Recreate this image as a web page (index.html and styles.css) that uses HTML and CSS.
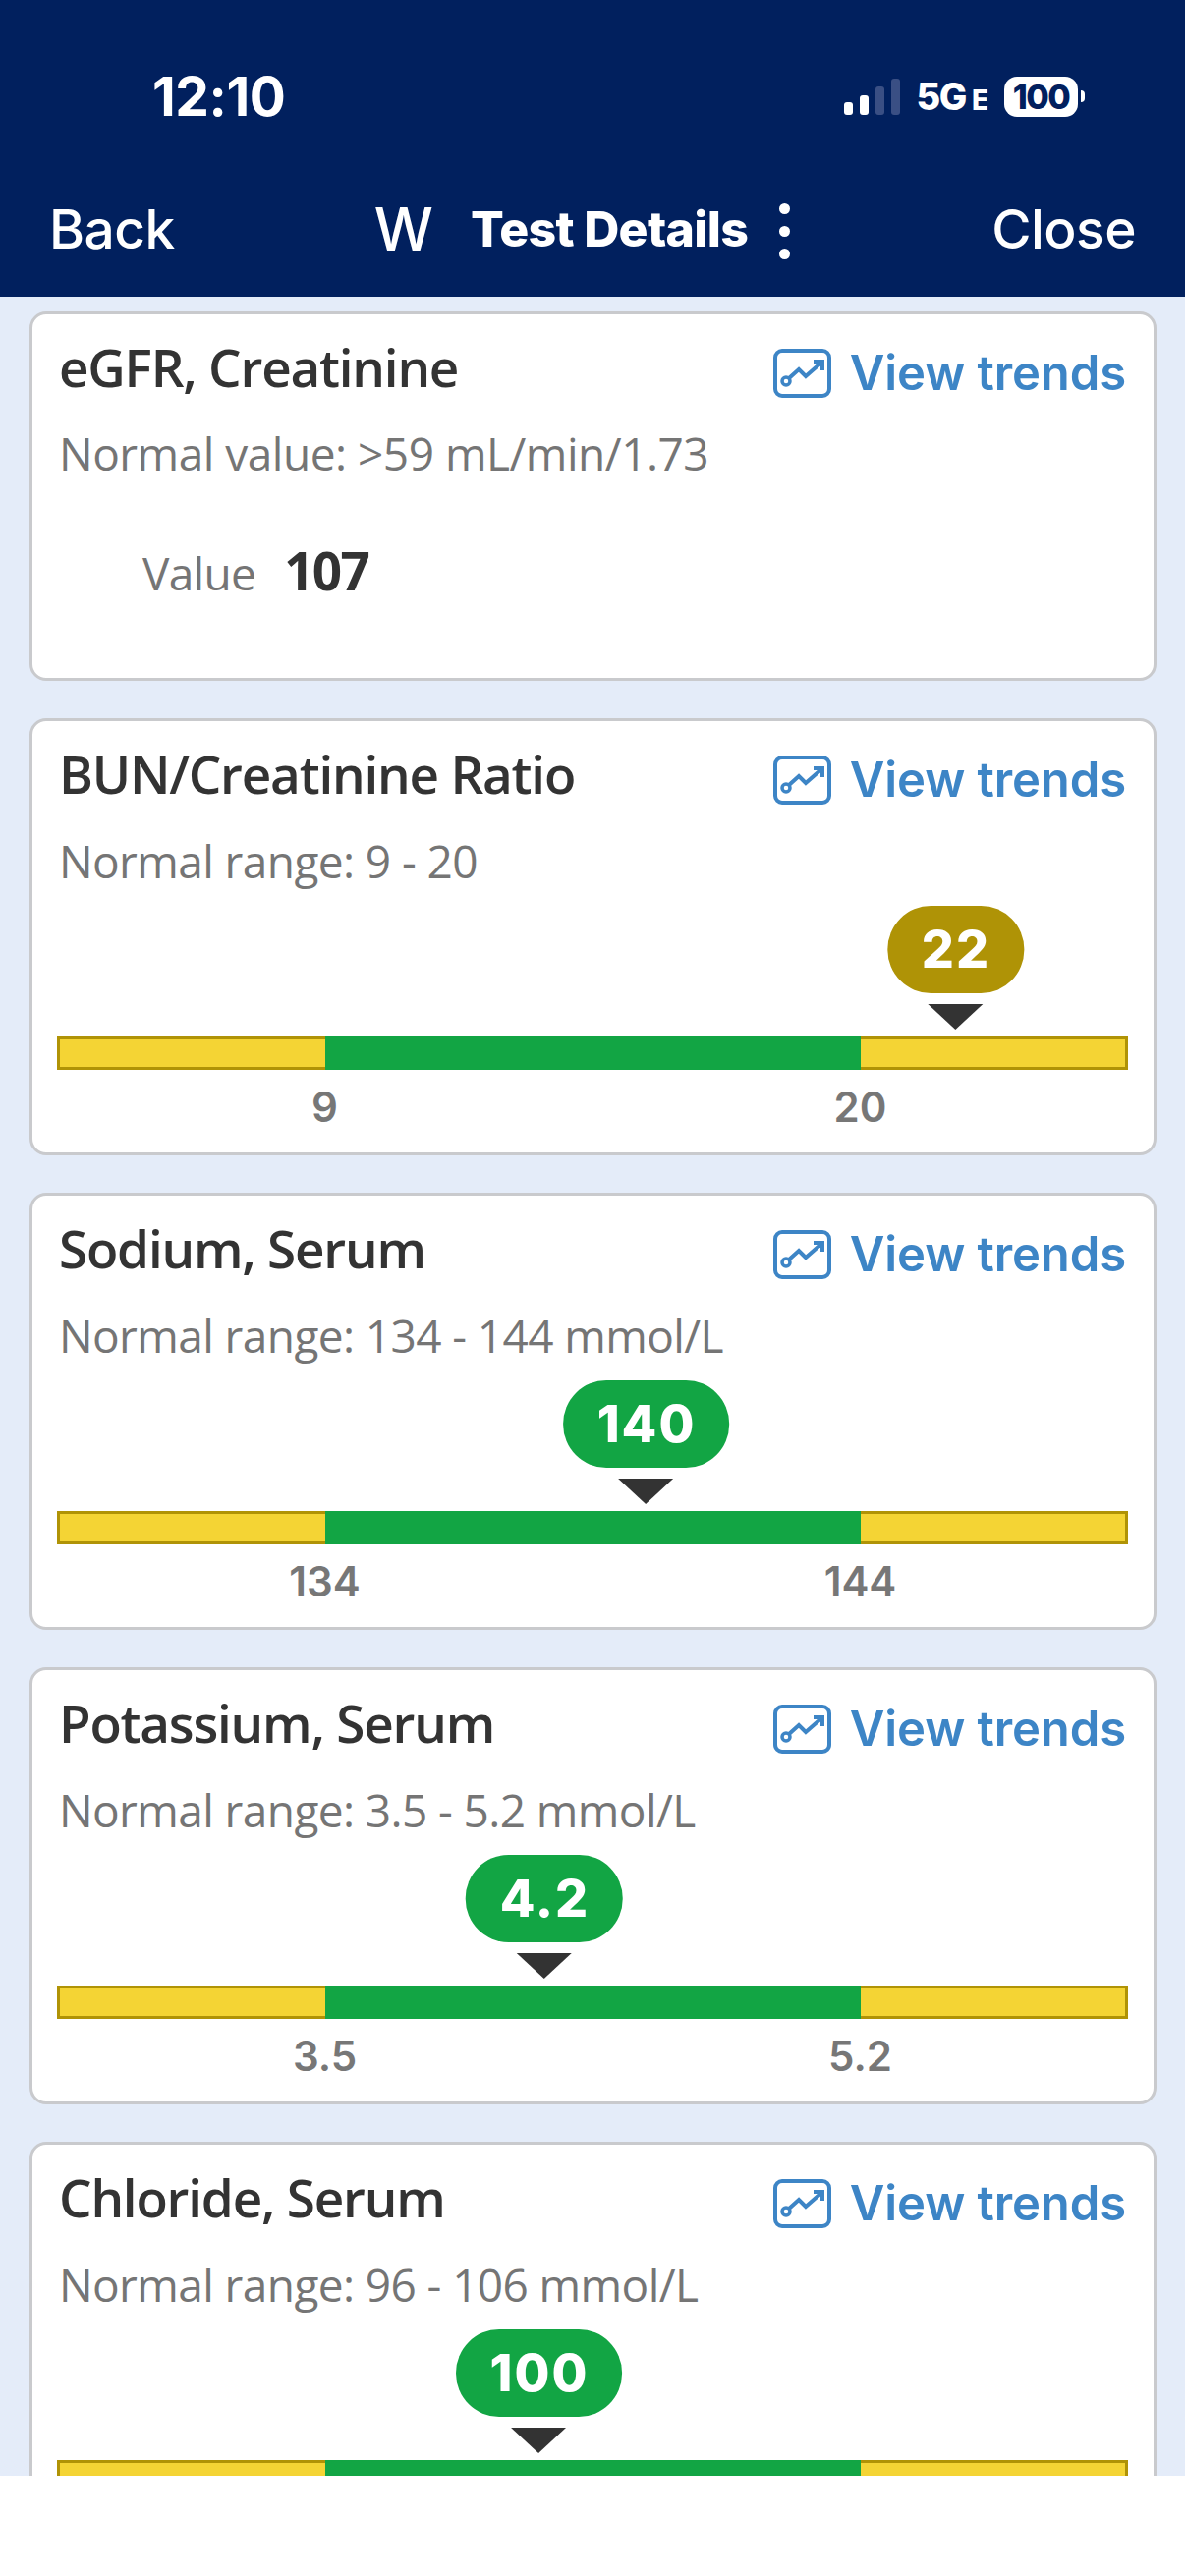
FILE: index.html
```html
<!DOCTYPE html>
<html lang="en">
<head>
<meta charset="utf-8">
<title>Test Details</title>
<link rel="stylesheet" href="styles.css">
</head>
<body>
<svg class="defs" width="0" height="0" aria-hidden="true">
  <symbol id="trend" viewBox="0 0 59 50">
    <rect x="2" y="2" width="55" height="46" rx="7" fill="none" stroke="currentColor" stroke-width="4"/>
    <circle cx="13" cy="33" r="4" fill="none" stroke="currentColor" stroke-width="3.5"/>
    <path d="M16 30 L26 21 L33 28 L49 14 M41 13 H50 V22" fill="none" stroke="currentColor" stroke-width="4"/>
  </symbol>
</svg>
<header class="header">
  <div class="status">
    <span class="time">12:10</span>
    <div class="status-right">
      <span class="signal"><i class="b1"></i><i class="b2"></i><i class="b3 dim"></i><i class="b4 dim"></i></span>
      <span class="net">5G<small>E</small></span>
      <span class="battery">100</span><span class="nub"></span>
    </div>
  </div>
  <nav class="nav">
    <span class="nav-link">Back</span>
    <div class="nav-center">
      <span class="nav-w">W</span>
      <span class="nav-title">Test Details</span>
      <span class="kebab"><i></i><i></i><i></i></span>
    </div>
    <span class="nav-link">Close</span>
  </nav>
</header>
<main class="content">
  <section class="card card-short">
    <div class="head"><h2 class="title">eGFR, Creatinine</h2><a class="trends"><svg class="trend-icon"><use href="#trend"/></svg>View trends</a></div>
    <p class="range">Normal value: &gt;59 mL/min/1.73</p>
    <p class="value-row"><span class="value-label">Value</span><b class="value-num">107</b></p>
  </section>

  <section class="card">
    <div class="head"><h2 class="title">BUN/Creatinine Ratio</h2><a class="trends"><svg class="trend-icon"><use href="#trend"/></svg>View trends</a></div>
    <p class="range">Normal range: 9 - 20</p>
    <div class="scale">
      <div class="track">
        <div class="marker" style="left:83.9%"><span class="bubble warn">22</span><span class="arrow"></span></div>
        <span class="seg low"></span><span class="seg ok"></span><span class="seg low"></span>
      </div>
      <div class="ticks"><span>9</span><span>20</span></div>
    </div>
  </section>

  <section class="card">
    <div class="head"><h2 class="title">Sodium, Serum</h2><a class="trends"><svg class="trend-icon"><use href="#trend"/></svg>View trends</a></div>
    <p class="range">Normal range: 134 - 144 mmol/L</p>
    <div class="scale">
      <div class="track">
        <div class="marker" style="left:55%"><span class="bubble">140</span><span class="arrow"></span></div>
        <span class="seg low"></span><span class="seg ok"></span><span class="seg low"></span>
      </div>
      <div class="ticks"><span>134</span><span>144</span></div>
    </div>
  </section>

  <section class="card">
    <div class="head"><h2 class="title">Potassium, Serum</h2><a class="trends"><svg class="trend-icon"><use href="#trend"/></svg>View trends</a></div>
    <p class="range">Normal range: 3.5 - 5.2 mmol/L</p>
    <div class="scale">
      <div class="track">
        <div class="marker" style="left:45.5%"><span class="bubble">4.2</span><span class="arrow"></span></div>
        <span class="seg low"></span><span class="seg ok"></span><span class="seg low"></span>
      </div>
      <div class="ticks"><span>3.5</span><span>5.2</span></div>
    </div>
  </section>

  <section class="card">
    <div class="head"><h2 class="title">Chloride, Serum</h2><a class="trends"><svg class="trend-icon"><use href="#trend"/></svg>View trends</a></div>
    <p class="range">Normal range: 96 - 106 mmol/L</p>
    <div class="scale">
      <div class="track">
        <div class="marker" style="left:45%"><span class="bubble">100</span><span class="arrow"></span></div>
        <span class="seg low"></span><span class="seg ok"></span><span class="seg low"></span>
      </div>
    </div>
  </section>
</main>
</body>
</html>
```
FILE: styles.css
```css
* { box-sizing: border-box; }
html, body { margin: 0; padding: 0; }
body {
  width: 1206px;
  height: 2622px;
  background: #fff;
  font-family: Inter, "Liberation Sans", sans-serif;
  overflow: hidden;
}
.defs { position: absolute; }
.header {
  height: 302px;
  background: #01205e;
  color: #fff;
  display: flex;
  flex-direction: column;
}
.status {
  height: 196px;
  padding: 68px 102px 0 155px;
  display: flex;
  justify-content: space-between;
  align-items: flex-start;
}
.time { font-size: 55px; font-weight: 700; line-height: 60px; letter-spacing: -0.4px; }
.status-right { display: flex; align-items: center; height: 60px; }
.signal { display: flex; align-items: flex-end; gap: 7px; height: 38px; margin-right: 17px; }
.signal i { width: 9px; background: #fff; border-radius: 3px; display: block; }
.signal .b1 { height: 13px; }
.signal .b2 { height: 20px; }
.signal .b3 { height: 29px; }
.signal .b4 { height: 37px; }
.signal .dim { background: #3a4f84; }
.net { font-size: 38px; font-weight: 800; margin-right: 16px; line-height: 1; display: flex; align-items: baseline; letter-spacing: -1.5px; }
.net small { font-size: 28px; margin-left: 6px; letter-spacing: 0; }
.battery {
  width: 75px;
  height: 41px;
  border-radius: 13px;
  background: #fff;
  color: #01205e;
  font-size: 34px;
  font-weight: 800;
  line-height: 41px;
  text-align: center;
  letter-spacing: -1.5px;
}
.nub { width: 4px; height: 12px; background: #fff; border-radius: 0 6px 6px 0; margin-left: 3px; }
.nav {
  padding: 2px 50px 0;
  display: flex;
  align-items: center;
  justify-content: space-between;
  height: 72px;
}
.nav-link { font-size: 55px; line-height: 70px; font-weight: 500; letter-spacing: -0.5px; }
.nav-center { display: flex; align-items: center; margin-left: -2px; }
.nav-w { font-size: 60px; font-weight: 500; line-height: 70px; margin-right: 38px; }
.nav-title { font-size: 50px; font-weight: 800; line-height: 70px; letter-spacing: -0.7px; }
.kebab { display: flex; flex-direction: column; gap: 12px; margin: 4px 0 0 32px; }
.kebab i { width: 11px; height: 11px; border-radius: 50%; background: #fff; display: block; }

.content {
  height: 2218px;
  background: #e4ecf9;
  padding: 15px 29px 0 30px;
  display: flex;
  flex-direction: column;
  gap: 38px;
  overflow: hidden;
}
.card {
  flex: none;
  height: 445px;
  background: #fff;
  border: 3px solid #c9cacd;
  border-radius: 17px;
  padding: 0 26px 0 25px;
}
.card-short { height: 376px; }
.head { display: flex; justify-content: space-between; align-items: flex-start; padding: 22px 2px 0 2px; }
.title {
  margin: 0;
  font-family: "Open Sans", sans-serif;
  font-size: 53px;
  font-weight: 600;
  line-height: 64px;
  color: #333;
  letter-spacing: -1.2px;
}
.trends {
  display: flex;
  align-items: center;
  gap: 19px;
  color: #3d85c6;
  font-size: 49px;
  font-weight: 600;
  line-height: 60px;
  margin-top: 8px;
  letter-spacing: -0.1px;
}
.trend-icon { width: 59px; height: 50px; color: #3d85c6; flex: none; }
.range {
  margin: 22px 0 0 2px;
  font-family: "Open Sans", sans-serif;
  font-size: 46px;
  line-height: 60px;
  color: #757575;
  letter-spacing: -0.6px;
}
.card-short .range { margin-top: 21px; letter-spacing: -0.5px; }
.value-row { margin: 60px 0 0 87px; display: flex; align-items: baseline; gap: 29px; }
.value-label { font-family: "Open Sans", sans-serif; font-size: 46px; color: #757575; letter-spacing: -0.7px; line-height: 60px; }
.value-num { font-family: "Open Sans", sans-serif; font-size: 53px; font-weight: 700; color: #333; letter-spacing: -1.6px; line-height: 60px; }

.scale { padding-top: 76px; }
.track {
  position: relative;
  height: 34px;
  display: grid;
  grid-template-columns: 1fr 2fr 1fr;
  margin-top: 73px;
}
.seg { display: block; }
.seg.low { background: #f4d434; border: 3px solid #b09306; }
.seg.low:first-of-type { border-right: 0; }
.seg.low:last-of-type { border-left: 0; }
.seg.ok { background: #12a544; }
.marker {
  position: absolute;
  bottom: 100%;
  transform: translateX(-50%);
  margin-bottom: 7px;
  display: flex;
  flex-direction: column;
  align-items: center;
  gap: 11px;
}
.bubble {
  display: block;
  height: 89px;
  padding: 0 34px 0 35px;
  border-radius: 44px;
  background: #12a544;
  color: #fff;
  font-size: 52px;
  font-weight: 800;
  line-height: 89px;
  letter-spacing: 2px;
}
.bubble.warn { background: #af9306; }
.arrow {
  width: 0;
  height: 0;
  border-left: 28px solid transparent;
  border-right: 28px solid transparent;
  border-top: 26px solid #333;
}
.ticks {
  display: grid;
  grid-template-columns: 1fr 1fr;
  text-align: center;
  margin-top: 13px;
  color: #777;
  font-size: 42px;
  font-weight: 600;
  line-height: 50px;
}
```
